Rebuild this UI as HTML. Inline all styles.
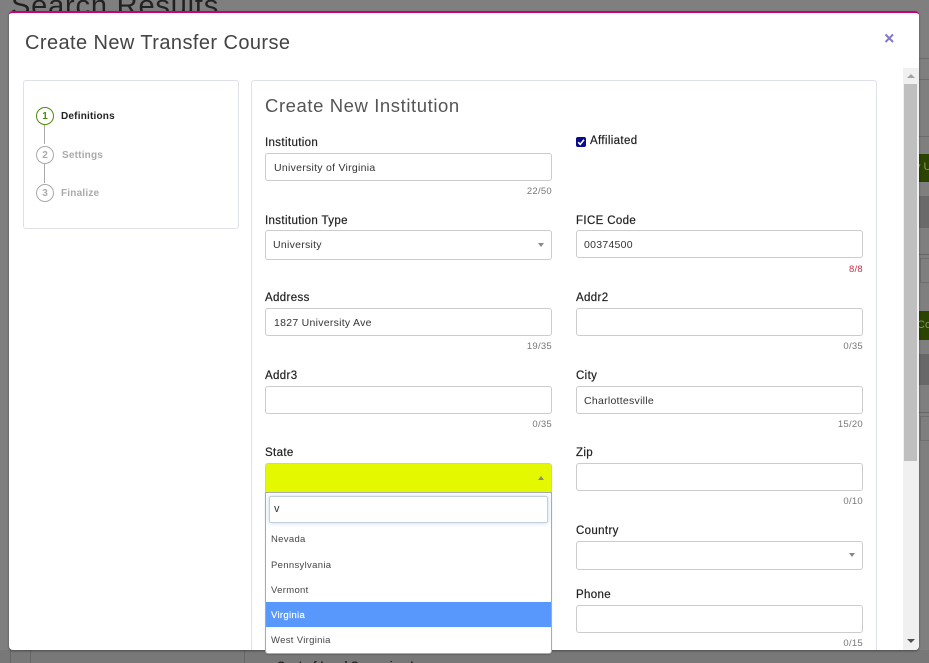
<!DOCTYPE html>
<html><head><meta charset="utf-8">
<style>
html,body{margin:0;padding:0;width:929px;height:663px;overflow:hidden;background:#7f7f7f;font-family:"Liberation Sans",sans-serif;}
body{position:relative;}
div,span{position:absolute;box-sizing:border-box;white-space:nowrap;}
.lb{font-size:11.5px;font-weight:400;color:#222;letter-spacing:.36px;line-height:13px;-webkit-text-stroke:.2px #222;margin-top:1px;}
.in{height:28px;width:287px;background:#fff;border:1px solid #ccc;border-radius:3px;font-size:10.5px;color:#333;line-height:28px;padding-left:8px;letter-spacing:.27px;}
.r{padding-left:7px;}
.ct{font-size:9.5px;color:#777;line-height:11px;text-align:right;width:60px;letter-spacing:.28px;margin-top:1px;}
.st{font-size:10px;font-weight:700;letter-spacing:.2px;line-height:12px;margin-top:1px;}
.ci{width:18px;height:18px;border-radius:50%;border:1px solid #aaa;font-size:10px;font-weight:700;color:#aaa;text-align:center;line-height:17px;background:#fff;}
.tri{width:0;height:0;border-left:3px solid transparent;border-right:3px solid transparent;border-top:4px solid #888;}
.op{left:271px;font-size:9.5px;color:#444;line-height:12px;letter-spacing:.32px;margin-top:1px;}
</style></head><body>
<div style="left:0;top:650px;width:929px;height:13px;background:#787878"></div>
<div style="left:11px;top:-11px;font-size:29px;color:#222;line-height:34px;letter-spacing:.82px;font-weight:400;">Search Results</div>
<div style="left:919px;top:58px;width:10px;height:1px;background:#6c6c6c"></div>
<div style="left:919px;top:79px;width:10px;height:1px;background:#6c6c6c"></div>
<div style="left:919px;top:136px;width:10px;height:1px;background:#6c6c6c"></div>
<div style="left:919px;top:154px;width:10px;height:28px;background:#2b4400;overflow:hidden;"><span style="left:-4px;top:7px;font-size:11px;color:#8a9a60;">y U</span></div>
<div style="left:919px;top:196px;width:10px;height:32px;background:#6a6a6a"></div>
<div style="left:919px;top:254px;width:10px;height:1px;background:#666"></div>
<div style="left:920px;top:258px;width:9px;height:25px;border:1px solid #6f6f6f;border-right:0"></div>
<div style="left:919px;top:311px;width:10px;height:29px;background:#2b4400;overflow:hidden;"><span style="left:-2px;top:8px;font-size:11px;color:#7f9a70;">Cor</span></div>
<div style="left:919px;top:354px;width:10px;height:31px;background:#686868"></div>
<div style="left:919px;top:412px;width:10px;height:1px;background:#666"></div>
<div style="left:920px;top:416px;width:9px;height:25px;border:1px solid #6f6f6f;border-right:0"></div>
<div style="left:10px;top:650px;width:1px;height:13px;background:#666"></div>
<div style="left:30px;top:650px;width:1px;height:13px;background:#666"></div>
<div style="left:244px;top:650px;width:1px;height:13px;background:#666"></div>
<div style="left:277px;top:660px;font-size:11px;font-weight:700;color:#222;line-height:13px;letter-spacing:.3px;">Cost of Land Surveying I</div>

<div style="left:9px;top:11px;width:910px;height:639px;background:#fff;border-top:2px solid #c8007e;border-radius:4px;box-shadow:0 1px 2px rgba(0,0,0,.4);overflow:hidden;">
 <div style="left:894px;top:55px;width:16px;height:584px;background:#f0f0f0;"></div>
 <div style="left:895px;top:71px;width:13px;height:377px;background:#bfbfbf;"></div>
 <div style="left:898px;top:61px;width:0;height:0;border-left:4px solid transparent;border-right:4px solid transparent;border-bottom:4px solid #a3a3a3;"></div>
 <div style="left:898px;top:626px;width:0;height:0;border-left:4px solid transparent;border-right:4px solid transparent;border-top:4px solid #505050;"></div>
</div>

<div style="left:25px;top:29px;font-size:20px;color:#444;line-height:28px;letter-spacing:.42px;font-weight:400;">Create New Transfer Course</div>
<svg style="position:absolute;left:884px;top:33px" width="11" height="11" viewBox="0 0 11 11"><path d="M1.5 1.5L9 9M9 1.5L1.5 9" stroke="#8078c8" stroke-width="2" fill="none"/></svg>

<div style="left:23px;top:80px;width:216px;height:149px;border:1px solid #dfe1e8;border-radius:3px;background:#fff"></div>
<div style="left:251px;top:80px;width:626px;height:570px;border:1px solid #dfe1e8;border-bottom:0;border-radius:3px 3px 0 0;background:#fff"></div>

<div style="left:44px;top:125px;width:1px;height:19px;background:#aaa"></div>
<div style="left:44px;top:164px;width:1px;height:19px;background:#aaa"></div>
<div class="ci" style="left:36px;top:107px;border-color:#4d8a0a;color:#4d8a0a">1</div>
<div class="ci" style="left:36px;top:146px;">2</div>
<div class="ci" style="left:36px;top:184px;">3</div>
<div class="st" style="left:61px;top:110px;color:#222">Definitions</div>
<div class="st" style="left:62px;top:149px;color:#aaa">Settings</div>
<div class="st" style="left:61px;top:187px;color:#aaa">Finalize</div>

<div style="left:265px;top:93px;font-size:18.5px;color:#555;line-height:25px;letter-spacing:.58px;">Create New Institution</div>

<div class="lb" style="left:265px;top:136px">Institution</div>
<div class="in" style="left:265px;top:153px">University of Virginia</div>
<div class="ct" style="left:492px;top:185px">22/50</div>

<div style="left:576px;top:137px;width:10px;height:10px;background:#0a0a8c;border-radius:2px;"></div>
<svg style="position:absolute;left:576px;top:137px" width="10" height="10" viewBox="0 0 10 10"><path d="M2.2 5.2L4.2 7.4L8 2.8" stroke="#fff" stroke-width="1.6" fill="none"/></svg>
<div class="lb" style="left:590px;top:134px">Affiliated</div>

<div class="lb" style="left:265px;top:214px">Institution Type</div>
<div class="in" style="left:265px;top:230px;height:30px;line-height:28px;padding-left:7px">University</div>
<div class="tri" style="left:538px;top:243px"></div>

<div class="lb" style="left:576px;top:214px">FICE Code</div>
<div class="in r" style="left:576px;top:230px">00374500</div>
<div class="ct" style="left:803px;top:263px;color:#c8324a">8/8</div>

<div class="lb" style="left:265px;top:291px">Address</div>
<div class="in" style="left:265px;top:308px">1827 University Ave</div>
<div class="ct" style="left:492px;top:340px">19/35</div>

<div class="lb" style="left:576px;top:291px">Addr2</div>
<div class="in" style="left:576px;top:308px"></div>
<div class="ct" style="left:803px;top:340px">0/35</div>

<div class="lb" style="left:265px;top:369px">Addr3</div>
<div class="in" style="left:265px;top:386px"></div>
<div class="ct" style="left:492px;top:418px">0/35</div>

<div class="lb" style="left:576px;top:369px">City</div>
<div class="in r" style="left:576px;top:386px">Charlottesville</div>
<div class="ct" style="left:803px;top:418px">15/20</div>

<div class="lb" style="left:265px;top:446px">State</div>
<div style="left:265px;top:463px;width:287px;height:30px;background:#e4f900;border:1px solid #ccc;border-bottom:0;border-radius:3px 3px 0 0;"></div>
<div style="left:538px;top:476px;width:0;height:0;border-left:3px solid transparent;border-right:3px solid transparent;border-bottom:4px solid #888;"></div>

<div style="left:265px;top:492px;width:287px;height:162px;background:#fff;border:1px solid #aaa;border-radius:0 0 3px 3px;box-shadow:0 1px 1px rgba(0,0,0,.15);"></div>
<div style="left:269px;top:496px;width:279px;height:27px;background:#fff;border:1px solid #c6d0d8;border-radius:2px;box-shadow:0 0 4px rgba(120,180,230,.5);font-size:11px;color:#333;line-height:25px;padding-left:4px;">v</div>
<div class="op" style="top:533px">Nevada</div>
<div class="op" style="top:559px">Pennsylvania</div>
<div class="op" style="top:584px">Vermont</div>
<div style="left:266px;top:602px;width:285px;height:25px;background:#5897fb;"></div>
<div class="op" style="top:609px;color:#fff;font-weight:400;-webkit-text-stroke:.2px #fff">Virginia</div>
<div class="op" style="top:634px">West Virginia</div>

<div class="lb" style="left:576px;top:446px">Zip</div>
<div class="in" style="left:576px;top:463px"></div>
<div class="ct" style="left:803px;top:495px">0/10</div>

<div class="lb" style="left:576px;top:524px">Country</div>
<div class="in" style="left:576px;top:541px;height:29px"></div>
<div class="tri" style="left:849px;top:553px"></div>

<div class="lb" style="left:576px;top:588px">Phone</div>
<div class="in" style="left:576px;top:605px"></div>
<div class="ct" style="left:803px;top:637px">0/15</div>
</body></html>
